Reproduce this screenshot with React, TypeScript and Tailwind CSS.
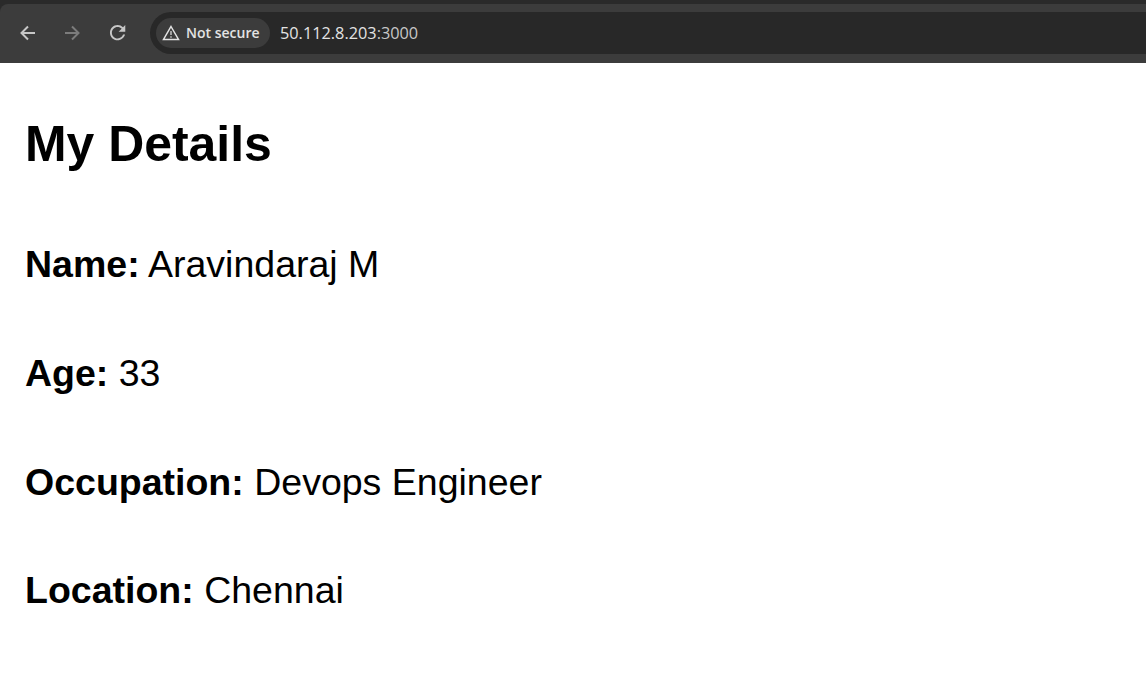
const details = [
  ["Name", "Aravindaraj M"],
  ["Age", "33"],
  ["Occupation", "Devops Engineer"],
  ["Location", "Chennai"],
];

export default function App() {
  return (
    <div className="h-[688px] w-full overflow-hidden bg-white text-black">
      <header className="h-[63px] bg-[#2a2a2a] pt-1">
        <div className="flex h-[59px] items-center rounded-tl-lg bg-[#3c3c3c] pb-px">
          <div className="flex w-[150px] shrink-0 items-center pl-[18px] text-[#c7c7c7]">
            <svg className="size-5" viewBox="0 0 20 20" fill="none" stroke="currentColor" strokeWidth="2">
              <path d="M17 10H4M10 3.500 3.500 10l6.500 6.500" />
            </svg>
            <svg className="ml-6 size-5 text-[#7c7c7c]" viewBox="0 0 20 20" fill="none" stroke="currentColor" strokeWidth="2">
              <path d="M3 10h13M10 3.500 16.500 10 10 16.500" />
            </svg>
            <svg className="ml-[25px] size-5" viewBox="0.9 1.9 20.9 20.9" fill="currentColor">
              <path d="M17.65 6.35A7.958 7.958 0 0 0 12 4c-4.42 0-7.99 3.58-7.99 8s3.57 8 7.99 8c3.73 0 6.84-2.55 7.73-6h-2.08A5.99 5.99 0 0 1 12 18c-3.31 0-6-2.69-6-6s2.69-6 6-6c1.66 0 3.14.69 4.22 1.78L13 11h7V4z" />
            </svg>
          </div>
          <div className="flex h-[42px] grow items-center rounded-l-full bg-[#282828] pl-1.5">
            <div className="flex h-[30px] w-[114px] items-center gap-1.5 rounded-full bg-[#3c3c3c] pl-1.5 font-['Open_Sans',sans-serif] text-sm font-semibold text-[#e3e3e3]">
              <svg className="size-[18px] shrink-0" viewBox="0 0 18 18" fill="none" stroke="currentColor" strokeWidth="1.5">
                <path d="M9 2.500 16.500 15.500h-15z" />
                <path strokeWidth="1.2" d="M9 7v4M9 12.300v1.500" />
              </svg>
              <span className="whitespace-nowrap">Not secure</span>
            </div>
            <span className="ml-2.5 font-['Open_Sans',sans-serif] text-[16.3px] text-[#e3e3e3]">50.112.8.203<span className="text-[#c7c7c7]">:3000</span></span>
          </div>
        </div>
      </header>
      <main className="pl-[25px] pt-[53px] font-['Liberation_Sans',Arial,sans-serif]">
        <h1 className="text-[49.9px] font-bold leading-[56px]">My Details</h1>
        <div className="mt-[70px] flex flex-col gap-[64.8px] text-[37.5px] leading-[44px]">
          {details.map(([label, value]) => (
            <p key={label}><strong>{label}:</strong> {value}</p>
          ))}
        </div>
      </main>
    </div>
  );
}
